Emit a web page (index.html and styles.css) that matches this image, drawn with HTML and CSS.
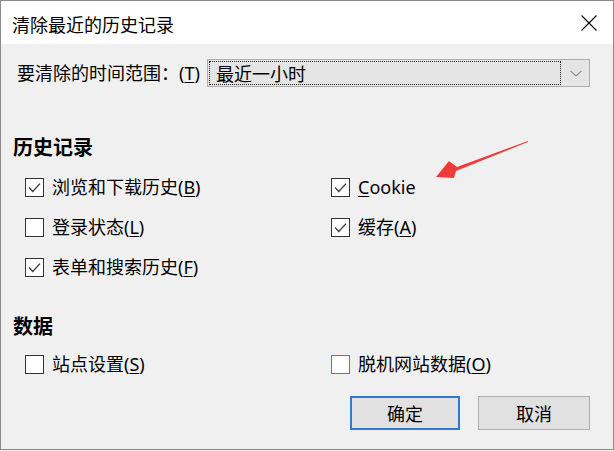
FILE: index.html
```html
<!DOCTYPE html>
<html lang="zh-CN">
<head>
<meta charset="utf-8">
<title>清除最近的历史记录</title>
<link rel="stylesheet" href="styles.css">
</head>
<body>
<div class="window">
  <div class="titlebar">
    <span class="title">清除最近的历史记录</span>
    <svg class="close" width="16" height="16" viewBox="0 0 16 16"><path d="M0.5 0.5L15.5 15.5M15.5 0.5L0.5 15.5" stroke="#000" stroke-width="1.1" fill="none"/></svg>
  </div>
  <div class="content">
    <div class="range-row">
      <span class="range-label">要清除的时间范围：(<u>T</u>)</span>
      <div class="select">
        <div class="select-value">最近一小时</div>
        <div class="select-arrow">
          <svg width="12" height="7" viewBox="0 0 12 7"><path d="M0.5 0.8L6 6L11.5 0.8" stroke="#8a8a8a" stroke-width="1.1" fill="none"/></svg>
        </div>
      </div>
    </div>

    <div class="heading heading-history">历史记录</div>
    <div class="options">
      <label class="opt"><span class="box checked"><svg viewBox="0 0 19 19"><path d="M4 9.6L7.8 13.4L15 5.6" stroke="#3f3f3f" stroke-width="1.4" fill="none"/></svg></span>浏览和下载历史(<u>B</u>)</label>
      <label class="opt"><span class="box checked"><svg viewBox="0 0 19 19"><path d="M4 9.6L7.8 13.4L15 5.6" stroke="#3f3f3f" stroke-width="1.4" fill="none"/></svg></span><span class="latin"><u>C</u>ookie</span></label>
      <label class="opt"><span class="box"></span>登录状态(<u>L</u>)</label>
      <label class="opt"><span class="box checked"><svg viewBox="0 0 19 19"><path d="M4 9.6L7.8 13.4L15 5.6" stroke="#3f3f3f" stroke-width="1.4" fill="none"/></svg></span>缓存(<u>A</u>)</label>
      <label class="opt"><span class="box checked"><svg viewBox="0 0 19 19"><path d="M4 9.6L7.8 13.4L15 5.6" stroke="#3f3f3f" stroke-width="1.4" fill="none"/></svg></span>表单和搜索历史(<u>F</u>)</label>
    </div>

    <div class="heading heading-data">数据</div>
    <div class="options">
      <label class="opt"><span class="box"></span>站点设置(<u>S</u>)</label>
      <label class="opt"><span class="box hover"></span>脱机网站数据(<u>O</u>)</label>
    </div>

    <div class="buttons">
      <button class="btn btn-default">确定</button>
      <button class="btn">取消</button>
    </div>

    <svg class="annot-arrow" width="100" height="50" viewBox="0 0 100 50">
      <polygon points="93,1 22,27 14,21 1,37 19,38 21,31 93,2" fill="#ee3a3a"/>
    </svg>
  </div>
</div>
</body>
</html>
```

FILE: styles.css
```css
html, body {
  margin: 0;
  padding: 0;
}
body {
  width: 614px;
  height: 451px;
  overflow: hidden;
  font-family: "Noto Sans", "Noto Sans CJK SC", sans-serif;
  font-size: 18px;
  color: #000;
  background: #f0f0f0;
}
.window {
  box-sizing: border-box;
  width: 614px;
  height: 450px;
  border: 1px solid #8a8a8a;
  background: #f0f0f0;
  display: flex;
  flex-direction: column;
}
.titlebar {
  height: 43px;
  background: #fff;
  display: flex;
  align-items: center;
  justify-content: space-between;
  padding: 0 16px 0 11px;
  flex-shrink: 0;
}
.title {
  font-family: "Noto Sans CJK SC", sans-serif;
  font-size: 18px;
  line-height: 24px;
  margin-top: 2px;
}
.close {
  display: block;
  margin-top: 1px;
}
.content {
  position: relative;
  flex: 1;
  padding: 15px 23px 0 12px;
  display: flex;
  flex-direction: column;
}
u {
  text-decoration: underline;
  text-decoration-thickness: 1px;
  text-underline-offset: 2px;
}
.range-row {
  display: flex;
  align-items: center;
  height: 28px;
}
.range-label {
  margin-left: 4px;
  width: 190px;
  flex-shrink: 0;
  line-height: 28px;
}
.select {
  box-sizing: border-box;
  width: 391px;
  height: 28px;
  border: 1px solid #adadad;
  background: #e5e5e5;
  display: flex;
  padding: 1px 0 1px 1px;
}
.select-value {
  flex: 1;
  border: 1px dotted #222;
  font-family: "Noto Sans CJK SC", sans-serif;
  line-height: 22px;
  padding-left: 6px;
}
.select-arrow {
  width: 28px;
  display: flex;
  align-items: center;
  justify-content: center;
}
.select-arrow svg {
  display: block;
  margin-left: 1px;
}
.heading {
  font-family: "Noto Sans CJK SC", sans-serif;
  font-weight: bold;
  font-size: 20px;
  line-height: 28px;
  height: 28px;
}
.heading-history {
  margin-top: 46px;
}
.heading-data {
  margin-top: 25px;
}
.options {
  display: grid;
  grid-template-columns: 306px 1fr;
  padding-left: 12px;
  margin-top: 6px;
}
.heading-data + .options {
  margin-top: 4px;
}
.opt {
  display: flex;
  align-items: center;
  height: 40px;
  line-height: 24px;
  white-space: nowrap;
}
.box {
  box-sizing: border-box;
  width: 19px;
  height: 19px;
  border: 1px solid #333;
  background: #fff;
  margin-right: 8px;
  flex-shrink: 0;
  position: relative;
}
.box svg {
  position: absolute;
  left: -1px;
  top: -1px;
  width: 19px;
  height: 19px;
}
.box.hover {
  border-color: #3c7fd6;
}
.latin {
  font-family: "Noto Sans", sans-serif;
}
.buttons {
  display: flex;
  justify-content: flex-end;
  gap: 18px;
  margin-top: 12px;
}
.btn {
  box-sizing: border-box;
  height: 34px;
  width: 112px;
  background: #e1e1e1;
  border: 1px solid #adadad;
  font-family: "Noto Sans CJK SC", sans-serif;
  font-size: 18px;
  color: #000;
  padding: 0;
  line-height: 30px;
}
.btn-default {
  width: 110px;
  border: 2px solid #2f7ad5;
}
.annot-arrow {
  position: absolute;
  left: 434px;
  top: 96px;
}
```
